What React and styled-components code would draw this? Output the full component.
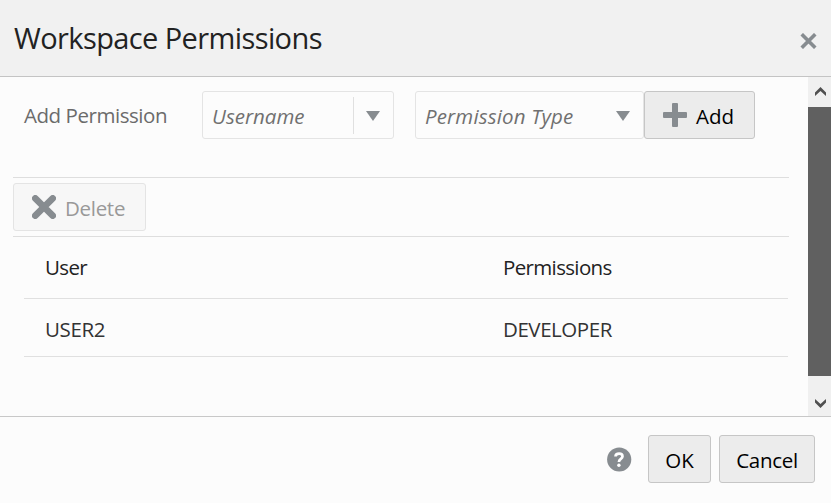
import React from 'react';
import styled, { createGlobalStyle } from 'styled-components';

const GlobalStyle = createGlobalStyle`
  * { box-sizing: border-box; }
  body { margin: 0; background: #fcfcfc; }
  button { margin: 0; font: inherit; }
`;

const Dialog = styled.div`
  display: flex;
  flex-direction: column;
  width: 831px;
  height: 503px;
  overflow: hidden;
  background: #fcfcfc;
  color: #333;
  font-family: 'Segoe UI', 'Open Sans', 'Noto Sans', sans-serif;
  font-size: 20.5px;
  line-height: 28px;
  white-space: nowrap;
`;

const Header = styled.header`
  display: flex;
  align-items: center;
  justify-content: space-between;
  flex: none;
  height: 77px;
  padding: 0 14px 0 14px;
  background: #f1f1f1;
  border-bottom: 1px solid #c4c4c4;
`;

const Title = styled.h1`
  margin: 0;
  font-size: 29px;
  font-weight: 400;
  line-height: 40px;
  letter-spacing: -0.6px;
  color: #222;
`;

const CloseButton = styled.button`
  display: flex;
  padding: 5px 0 0;
  border: 0;
  background: none;
`;

const Main = styled.main`
  display: flex;
  flex: none;
  height: 339px;
`;

const Content = styled.div`
  flex: 1;
  padding: 14px 19px 0 13px;
`;

const Form = styled.div`
  display: flex;
  height: 48px;
`;

const Label = styled.label`
  width: 189px;
  padding: 10px 0 0 11px;
  color: #6b6b6b;
  letter-spacing: -0.45px;
`;

const Field = styled.div`
  display: flex;
  align-items: center;
  justify-content: space-between;
  width: ${(p) => p.$width}px;
  margin-right: ${(p) => p.$gap || 0}px;
  padding-left: 9px;
  border: 1px solid #e4e4e4;
  border-radius: 3px;
  color: #707070;
  font-style: italic;
`;

const Trigger = styled.span`
  display: flex;
  align-items: center;
  justify-content: center;
  width: 40px;
  height: 37px;
  padding: 2px 2px 0 0;
  border-left: 1px solid ${(p) => (p.$divided ? '#e0e0e0' : 'transparent')};
`;

const Caption = styled.span`
  letter-spacing: ${(p) => p.$tracking || 0}px;
  padding-top: 2px;
`;

const Button = styled.button`
  display: flex;
  align-items: center;
  justify-content: ${(p) => (p.$icon ? 'flex-start' : 'center')};
  gap: 9px;
  width: ${(p) => p.$width}px;
  height: 48px;
  padding: 0 0 0 ${(p) => (p.$icon ? 18 : 0)}px;
  border: 1px solid ${(p) => (p.disabled ? '#e4e4e4' : '#c6c6c6')};
  border-radius: 3px;
  background: ${(p) => (p.disabled ? '#f7f7f7' : '#ececec')};
  color: ${(p) => (p.disabled ? '#999' : '#000')};
`;

const Toolbar = styled.div`
  height: 60px;
  margin-top: 38px;
  padding-top: 5px;
  border: solid #dedede;
  border-width: 1px 0;
`;

const Table = styled.div`
  margin: 0 1px 0 11px;
`;

const Row = styled.div`
  display: grid;
  grid-template-columns: 458px 1fr;
  align-items: center;
  height: ${(p) => p.$height}px;
  padding: 0 0 ${(p) => p.$offset || 0}px 21px;
  border-bottom: 1px solid #e0e0e0;
  color: ${(p) => (p.$head ? '#222' : '#333')};
`;

const Scrollbar = styled.div`
  display: flex;
  flex-direction: column;
  width: 23px;
  background: #f0f0f0;
`;

const ScrollArrow = styled.div`
  display: flex;
  align-items: center;
  justify-content: center;
  flex: none;
  height: ${(p) => p.$height}px;
  padding: 0 0 ${(p) => p.$lift || 0}px 2px;
`;

const Thumb = styled.div`
  flex: none;
  height: 269px;
  margin-bottom: 14px;
  background: #606060;
`;

const Footer = styled.footer`
  display: flex;
  align-items: center;
  justify-content: flex-end;
  gap: 8px;
  flex: 1;
  padding: 0 16px 3px 0;
  border-top: 1px solid #c8c8c8;
`;

const Help = styled.span`
  display: flex;
  margin-right: 8px;
  padding-top: 1px;
`;

const Triangle = () => (
  <svg width="14" height="10" viewBox="0 0 14 10"><path d="M0 0H14L7 10Z" fill="#878c90" /></svg>
);

const Plus = () => (
  <svg width="24" height="24" viewBox="0 0 24 24">
    <path d="M10 0H14Q15 0 15 1V9H23Q24 9 24 10V14Q24 15 23 15H15V23Q15 24 14 24H10Q9 24 9 23V15H1Q0 15 0 14V10Q0 9 1 9H9V1Q9 0 10 0Z" fill="#878c90" />
  </svg>
);

const Cross = () => (
  <svg width="24" height="24" viewBox="0 0 24 24">
    <path d="M3.3 3.3L20.7 20.7M20.7 3.3L3.3 20.7" stroke="#878c90" strokeWidth="6.6" strokeLinecap="round" />
  </svg>
);

const Close = () => (
  <svg width="17" height="16" viewBox="0 0 17 16">
    <path d="M3 2.5L14 13.5M14 2.5L3 13.5" stroke="#878c90" strokeWidth="3.6" strokeLinecap="square" />
  </svg>
);

const Chevron = ({ down }) => (
  <svg width="11" height="9" viewBox="0 0 11 9">
    <path d={down ? 'M0 0L5.5 5L11 0V3.5L5.5 9L0 3.5Z' : 'M0 9L5.5 4L11 9V5.5L5.5 0L0 5.5Z'} fill="#505050" />
  </svg>
);

const Question = () => (
  <svg width="25" height="25" viewBox="0 0 25 25">
    <circle cx="12.2" cy="12.5" r="12.1" fill="#878c90" />
    <path d="M8.5 9.5C8.6 7.4 10.1 6.6 12.1 6.6C14.2 6.6 15.5 7.7 15.5 9.4C15.5 12 11.9 11.8 11.9 15" fill="none" stroke="#fff" strokeWidth="2.7" />
    <circle cx="11.9" cy="18.3" r="1.7" fill="#fff" />
  </svg>
);

export default function App() {
  return (
    <>
      <GlobalStyle />
      <Dialog>
        <Header>
          <Title>Workspace Permissions</Title>
          <CloseButton aria-label="Close"><Close /></CloseButton>
        </Header>
        <Main>
          <Content>
            <Form>
              <Label>Add Permission</Label>
              <Field $width={192} $gap={21}>
                <Caption>Username</Caption>
                <Trigger $divided><Triangle /></Trigger>
              </Field>
              <Field $width={229}>
                <Caption $tracking={0.15}>Permission Type</Caption>
                <Trigger><Triangle /></Trigger>
              </Field>
              <Button $width={111} $icon><Plus /><Caption>Add</Caption></Button>
            </Form>
            <Toolbar>
              <Button $width={133} $icon disabled><Cross /><Caption $tracking={-0.3}>Delete</Caption></Button>
            </Toolbar>
            <Table>
              <Row $height={62} $head $offset={4}>
                <Caption $tracking={-0.65}>User</Caption>
                <Caption $tracking={-0.65}>Permissions</Caption>
              </Row>
              <Row $height={58}>
                <Caption $tracking={-0.4}>USER2</Caption>
                <Caption $tracking={-0.45}>DEVELOPER</Caption>
              </Row>
            </Table>
          </Content>
          <Scrollbar>
            <ScrollArrow $height={30} $lift={2}><Chevron /></ScrollArrow>
            <Thumb />
            <ScrollArrow $height={26}><Chevron down /></ScrollArrow>
          </Scrollbar>
        </Main>
        <Footer>
          <Help><Question /></Help>
          <Button $width={63}><Caption>OK</Caption></Button>
          <Button $width={96}><Caption $tracking={-0.3}>Cancel</Caption></Button>
        </Footer>
      </Dialog>
    </>
  );
}
